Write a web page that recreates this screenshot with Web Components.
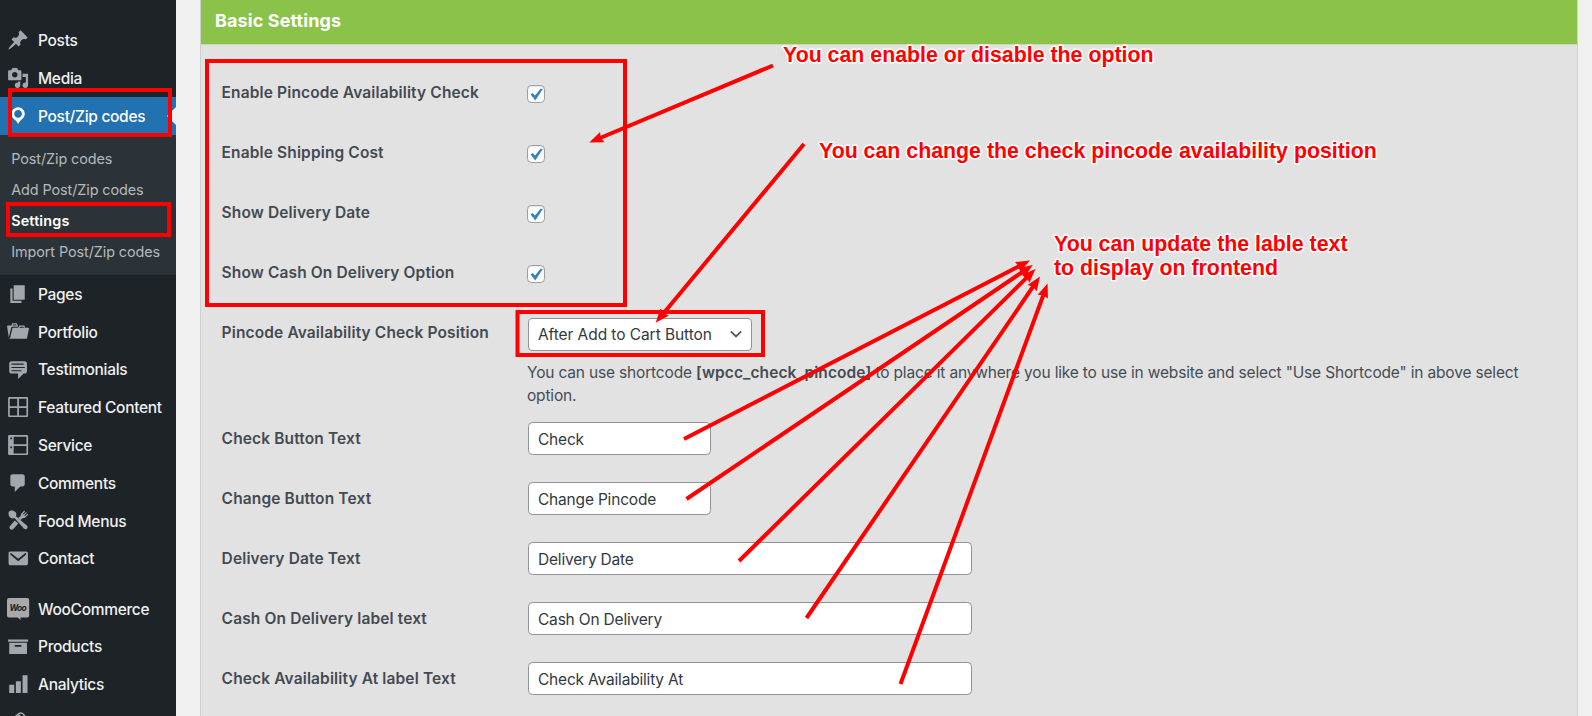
<!DOCTYPE html>
<html lang="en">
<head>
<meta charset="utf-8">
<title>Basic Settings</title>
<style>
html,body{margin:0;height:716px;overflow:hidden}
body{background:#f0f0f0;font-family:Inter,"Liberation Sans",sans-serif;font-size:15.5px;color:#3c434a}
</style>
</head>
<body>
<admin-page></admin-page>
<script>
const ICONS = {
  post:'<path d="M10.44 3.02l1.82-1.82 6.36 6.35-1.83 1.82c-1.05-.68-2.48-.57-3.41.36l-.75.75c-.92.93-1.04 2.35-.35 3.41l-1.83 1.82-2.41-2.41-2.8 2.79c-.42.42-3.38 2.71-3.8 2.29s1.86-3.39 2.28-3.81l2.79-2.79L4.1 9.36l1.83-1.82c1.05.69 2.48.57 3.4-.36l.75-.75c.93-.92 1.05-2.35.36-3.41z"/>',
  media:'<path fill-rule="evenodd" d="M13 11V4c0-.55-.45-1-1-1h-1.67L9 1H5L3.67 3H2c-.55 0-1 .45-1 1v7c0 .55.45 1 1 1h10c.55 0 1-.45 1-1zM7 4.5c1.38 0 2.5 1.12 2.5 2.5S8.38 9.5 7 9.5 4.5 8.38 4.5 7 5.62 4.5 7 4.5zM14 6h5v10.5c0 1.38-1.12 2.5-2.5 2.5S14 17.88 14 16.5s1.12-2.5 2.5-2.5c.17 0 .34.02.5.05V9h-3V6zm-4 8.05V13h2v3.5c0 1.38-1.12 2.5-2.5 2.5S7 17.88 7 16.5 8.12 14 9.5 14c.17 0 .34.02.5.05z"/>',
  location:'<path fill-rule="evenodd" d="M10 2C6.69 2 4 4.69 4 8c0 2.02 1.17 3.71 2.53 4.89.43.37 1.18.96 1.85 1.83.74.97 1.41 2.01 1.62 2.71.21-.7.88-1.74 1.62-2.71.67-.87 1.42-1.46 1.85-1.83C14.83 11.71 16 10.02 16 8c0-3.31-2.69-6-6-6zm0 2.56c1.9 0 3.44 1.54 3.44 3.44S11.9 11.44 10 11.44 6.56 9.9 6.56 8 8.1 4.56 10 4.56z"/>',
  page:'<path d="M6 15V2h10v13H6zm-1 1h8v2H3V5h2v11z"/>',
  portfolio:'<path fill-rule="evenodd" d="M4 5H.78c-.37 0-.74.32-.69.84l1.56 9.99S3.5 8.47 3.86 6.7c.11-.53.61-.7.98-.7H10s-.7-2.08-.77-2.31C9.11 3.25 8.89 3 8.45 3H5.14c-.36 0-.7.23-.8.64C4.25 4.04 4 5 4 5zm4.88 0h-4s.42-1 .87-1h2.13c.48 0 1 1 1 1zM2.67 16.25c-.31.47-.76.75-1.26.75h15.73c.54 0 .92-.31 1.03-.83.44-2.19 1.68-8.44 1.68-8.44.07-.5-.3-.73-.62-.73H16V5.53c0-.16-.26-.53-.66-.53h-3.76c-.52 0-.87.58-.87.58L10 7H5.59c-.32 0-.63.19-.69.5 0 0-1.59 6.7-1.72 7.33-.07.37-.22.99-.51 1.42zM15.38 7H11s.58-1 1.13-1h2.29c.71 0 .96 1 .96 1z"/>',
  testimonial:'<path fill-rule="evenodd" d="M4 3h12c.55 0 1.02.2 1.41.59S18 4.45 18 5v7c0 .55-.2 1.02-.59 1.41S16.55 14 16 14h-1l-5 5v-5H4c-.55 0-1.02-.2-1.41-.59S2 12.55 2 12V5c0-.55.2-1.02.59-1.41S3.45 3 4 3zm11 2H4v1h11V5zm1 3H4v1h12V8zm-3 3H4v1h9v-1z"/>',
  grid:'<path fill-rule="evenodd" d="M2 1h16a1 1 0 0 1 1 1v16a1 1 0 0 1-1 1H2a1 1 0 0 1-1-1V2a1 1 0 0 1 1-1zM2.5 2.5v6.7h6.7V2.5zM10.8 2.5v6.7h6.7V2.5zM2.5 10.8v6.7h6.7v-6.7zM10.8 10.8v6.7h6.7v-6.7z"/>',
  service:'<path fill-rule="evenodd" d="M2 1h16a1 1 0 0 1 1 1v16a1 1 0 0 1-1 1H2a1 1 0 0 1-1-1V2a1 1 0 0 1 1-1zM6 2.5v6.7h11.5V2.5zM6 10.8v6.7h11.5v-6.7zM3 3.2v1.6h1.6V3.2zM3 11.2v1.6h1.6v-1.6z"/>',
  comments:'<path d="M5 2h9c1.1 0 2 .9 2 2v7c0 1.1-.9 2-2 2h-2l-5 5v-5H5c-1.1 0-2-.9-2-2V4c0-1.1.9-2 2-2z"/>',
  food:'<path d="M2 2C3.600.800 6.400 1.300 7.600 2.800c1 1.200 1.100 2.600.5 3.700l9.800 8.400c.9.900.9 2 .1 2.800s-1.900.800-2.800-.1L6.700 8.100c-1.200.6-2.700.5-3.800-.4C1.300 6.400.800 3.500 2 2z"/><path d="M12.400 6.400c-.2-1 .1-1.700.8-2.500l2.400-2.500.7.600-2 2.500.6.500 2.300-2.300.7.700-2.300 2.300.5.600 2.500-2 .6.700-2.500 2.400c-.7.700-1.500 1-2.500.8L12.200 10 10 8zM7 10.300l3.200 2.700-4.500 5c-.9.900-2 .9-2.900.1s-.8-2 .1-2.900z"/>',
  email:'<path fill-rule="evenodd" d="M3 4h14.300c.9 0 1.600.700 1.600 1.600v9.200c0 .9-.7 1.600-1.600 1.600H3c-.9 0-1.600-.700-1.600-1.600V5.600C1.400 4.700 2.100 4 3 4zM3.600 5.500c-.7.200-.9.900-.4 1.400l6.900 5.900 6.900-5.900c.5-.5.300-1.200-.4-1.400l-6.500 5z"/>',
  woo:'<path d="M1.800 0h16.400A1.800 1.800 0 0 1 20 1.800v13.900a1.800 1.800 0 0 1-1.800 1.800H12l.300 2.400-2.800-2.400H1.800A1.800 1.800 0 0 1 0 15.700V1.800A1.800 1.800 0 0 1 1.800 0z" fill="#a9a9a9"/><text x="9.700" y="11.700" text-anchor="middle" font-family="Inter,sans-serif" font-style="italic" font-weight="700" font-size="7.600" letter-spacing="-.6" fill="#1d2327">Woo</text>',
  products:'<path fill-rule="evenodd" d="M1 4h18v2H1zM2 7h16v10.200H2zM7 9v1.500h6V9z"/>',
  analytics:'<path d="M2 10.500h4.500V18H2zM8 7.500h4.500V18H8zM14 2h4.500v16H14z"/>',
  marketing:'<path fill="none" stroke="#a2a7ad" stroke-width="1.400" d="M4 8l6.500-5.500c2-1.600 4.600-.2 5.500 2.500l2 7"/><path d="M7 6.500l4-3.500 3 3-2 5H5z"/>'
};

class AdminPage extends HTMLElement{
  constructor(){
    super();
    this.attachShadow({mode:'open'}).innerHTML=`
    <style>
      :host{display:flex;position:relative;width:1592px;height:716px;overflow:hidden}
      side-menu{flex:none}
      settings-panel{flex:1;margin:0 14.200px 0 24.500px}
    </style>
    <side-menu>
      <menu-item icon="post">Posts</menu-item>
      <menu-item icon="media">Media</menu-item>
      <menu-item icon="location" current>Post/Zip codes</menu-item>
      <sub-menu>
        <sub-item>Post/Zip codes</sub-item>
        <sub-item>Add Post/Zip codes</sub-item>
        <sub-item current>Settings</sub-item>
        <sub-item>Import Post/Zip codes</sub-item>
      </sub-menu>
      <menu-item icon="page">Pages</menu-item>
      <menu-item icon="portfolio">Portfolio</menu-item>
      <menu-item icon="testimonial">Testimonials</menu-item>
      <menu-item icon="grid">Featured Content</menu-item>
      <menu-item icon="service">Service</menu-item>
      <menu-item icon="comments">Comments</menu-item>
      <menu-item icon="food">Food Menus</menu-item>
      <menu-item icon="email">Contact</menu-item>
      <menu-item icon="woo" spaced>WooCommerce</menu-item>
      <menu-item icon="products">Products</menu-item>
      <menu-item icon="analytics">Analytics</menu-item>
      <menu-item icon="marketing">Marketing</menu-item>
    </side-menu>
    <settings-panel heading="Basic Settings">
      <setting-row label="Enable Pincode Availability Check"><check-box></check-box></setting-row>
      <setting-row label="Enable Shipping Cost"><check-box></check-box></setting-row>
      <setting-row label="Show Delivery Date"><check-box></check-box></setting-row>
      <setting-row label="Show Cash On Delivery Option"><check-box></check-box></setting-row>
      <setting-row label="Pincode Availability Check Position" tall>
        <select-box>After Add to Cart Button</select-box>
        <help-text>You can use shortcode <b>[wpcc_check_pincode]</b> to place it anywhere you like to use in website and select "Use Shortcode" in above select<br>option.</help-text>
      </setting-row>
      <setting-row field label="Check Button Text"><text-box>Check</text-box></setting-row>
      <setting-row field label="Change Button Text"><text-box>Change Pincode</text-box></setting-row>
      <setting-row field label="Delivery Date Text"><text-box wide>Delivery Date</text-box></setting-row>
      <setting-row field label="Cash On Delivery label text"><text-box wide>Cash On Delivery</text-box></setting-row>
      <setting-row field label="Check Availability At label Text"><text-box wide>Check Availability At</text-box></setting-row>
    </settings-panel>
    <note-layer></note-layer>`;
  }
}

class SideMenu extends HTMLElement{
  constructor(){
    super();
    this.attachShadow({mode:'open'}).innerHTML=`
    <style>:host{display:flex;flex-direction:column;box-sizing:border-box;width:175.500px;height:716px;overflow:hidden;padding-top:21.500px;background:#1d2327}</style><slot></slot>`;
  }
}

class MenuItem extends HTMLElement{
  constructor(){
    super();
    this.attachShadow({mode:'open'}).innerHTML=`
    <style>
      :host{display:flex;position:relative;flex:none;align-items:center;height:37.800px;color:#f0f0f1;font-weight:500;letter-spacing:-.3px;white-space:nowrap}
      :host([spaced]){margin-top:12.500px}
      :host([current]){background:#2271b1;color:#fff}
      :host([current])::after{content:"";position:absolute;right:0;top:50%;margin-top:-9px;border:solid transparent;border-width:9px 9px 9px 0;border-right-color:#f0f0f0}
      svg{flex:none;width:22.200px;height:22.200px;margin:0 9px 0 6.800px;fill:#a2a7ad;overflow:visible}
      span{padding-top:1px}
      :host([current]) svg{fill:#fff}
    </style>
    <svg viewBox="0 0 20 20">${ICONS[this.getAttribute('icon')]||''}</svg><span><slot></slot></span>`;
  }
}

class SubMenu extends HTMLElement{
  constructor(){
    super();
    this.attachShadow({mode:'open'}).innerHTML=`
    <style>:host{display:flex;flex:none;flex-direction:column;padding:7.800px 0;background:#2c3338}</style><slot></slot>`;
  }
}

class SubItem extends HTMLElement{
  constructor(){
    super();
    this.attachShadow({mode:'open'}).innerHTML=`
    <style>
      :host{display:flex;align-items:center;height:31.100px;padding-left:11.200px;font-size:14.400px;letter-spacing:-.08px;color:#b4b9be;white-space:nowrap}
      :host([current]){color:#fff;font-weight:600;letter-spacing:.15px}
    </style><slot></slot>`;
  }
}

class SettingsPanel extends HTMLElement{
  constructor(){
    super();
    this.attachShadow({mode:'open'}).innerHTML=`
    <style>
      :host{display:block;box-sizing:border-box;height:730px;background:#e2e2e2;border:solid #cfd0d2;border-width:0 1px}
      header{display:flex;align-items:center;box-sizing:border-box;height:44px;padding:0 0 3px 14px;background:#8bc34a;color:#fff;font-size:18px;font-weight:650;letter-spacing:.1px}
      section{border-top:1px solid #c9d8b5;padding:16px 0 0 20.600px}
    </style>
    <header>${this.getAttribute('heading')||''}</header>
    <section><slot></slot></section>`;
  }
}

class SettingRow extends HTMLElement{
  constructor(){
    super();
    this.attachShadow({mode:'open'}).innerHTML=`
    <style>
      :host{display:grid;grid-template-columns:306.400px 1fr;box-sizing:border-box;height:60px;align-items:start}
      :host([tall]){height:104.400px}
      label{padding-top:22px;line-height:20px;font-weight:600;letter-spacing:.13px;color:#434a52}
      :host([field]) label{padding-top:24px}
      div{padding-top:16.600px}
    </style>
    <label>${this.getAttribute('label')||''}</label>
    <div><slot></slot></div>`;
  }
}

class CheckBox extends HTMLElement{
  constructor(){
    super();
    this.attachShadow({mode:'open'}).innerHTML=`
    <style>
      :host{display:flex;box-sizing:border-box;width:18px;height:18px;margin:7.700px 0 0 -1px;background:#fff;border:1px solid #9a9da2;border-radius:4.400px;box-shadow:inset 0 1px 2px rgba(0,0,0,.1)}
      svg{width:16px;height:16px}
    </style>
    <svg viewBox="0 0 16 16"><path d="M2.600 8.400l2.100-1.300 2.300 2.500 5.500-6.900 2.300.2-7.500 11.600z" fill="#3582c4"/></svg>`;
  }
}

class TextBox extends HTMLElement{
  constructor(){
    super();
    this.attachShadow({mode:'open'}).innerHTML=`
    <style>
      :host{display:flex;align-items:center;box-sizing:border-box;width:182.700px;height:33.200px;padding:1px 0 0 9px;background:#fff;border:1px solid #8f9297;border-radius:4.400px;color:#32393f;letter-spacing:-.19px}
      :host([wide]){width:444.200px}
    </style><slot></slot>`;
  }
}

class SelectBox extends HTMLElement{
  constructor(){
    super();
    this.attachShadow({mode:'open'}).innerHTML=`
    <style>
      :host{display:flex;align-items:center;justify-content:space-between;box-sizing:border-box;width:224.200px;height:33.200px;padding:0 8px 0 9px;background:#fff;border:1px solid #8f9297;border-radius:4px;color:#32393f;letter-spacing:-.07px}
      svg{width:14px;height:14px}
    </style><slot></slot>
    <svg viewBox="0 0 14 14"><path d="M1.800 4.300L7 9.500l5.200-5.200" fill="none" stroke="#555a60" stroke-width="1.900"/></svg>`;
  }
}

class HelpText extends HTMLElement{
  constructor(){
    super();
    this.attachShadow({mode:'open'}).innerHTML=`
    <style>
      :host{display:block;margin:10.200px 0 0 -1px;line-height:23.300px;letter-spacing:-.17px;color:#454c54;white-space:nowrap}
      ::slotted(b){font-weight:600;letter-spacing:.1px}
    </style><slot></slot>`;
  }
}

class NoteLayer extends HTMLElement{
  constructor(){
    super();
    const arrows=[[773,65.500,589.300,142.500],[804,144,655.700,322.700],[684,439,1030,260.500],[686.500,499,1032.800,265],[739,561,1035.500,269],[806.500,618,1040,276.500],[900.500,684,1047.600,283.500]];
    const draw=([x1,y1,x2,y2])=>{
      const l=Math.hypot(x2-x1,y2-y1),a=Math.atan2(y2-y1,x2-x1)*180/Math.PI;
      return `<path transform="translate(${x1} ${y1}) rotate(${a})" d="M0-2H${l-13}L${l-14}-5.500 ${l} 0 ${l-14} 5.500 ${l-13} 2H0z"/>`;
    };
    const boxes=[[205,59,422,248],[515.500,310,249.500,47],[8,88,164,49],[6,202,165,35]];
    this.attachShadow({mode:'open'}).innerHTML=`
    <style>
      :host{position:absolute;inset:0;pointer-events:none}
      svg{display:block}
      text{font:700 21.330px "Liberation Sans",Arial,sans-serif;fill:red;stroke:#fff;stroke-width:3px;stroke-linejoin:round;paint-order:stroke}
    </style>
    <svg width="1592" height="716">
      <g fill="none" stroke="red" stroke-width="4">${boxes.map(([x,y,w,h])=>`<rect x="${x+2}" y="${y+2}" width="${w-4}" height="${h-4}"/>`).join('')}</g>
      <g fill="red">${arrows.map(draw).join('')}</g>
      <text x="783" y="62">You can enable or disable the option</text>
      <text x="819" y="158">You can change the check pincode availability position</text>
      <text x="1054" y="251">You can update the lable text</text>
      <text x="1054" y="275">to display on frontend</text>
    </svg>`;
  }
}

const parts={'menu-item':MenuItem,'sub-item':SubItem,'sub-menu':SubMenu,'side-menu':SideMenu,'check-box':CheckBox,'text-box':TextBox,'select-box':SelectBox,'help-text':HelpText,'setting-row':SettingRow,'settings-panel':SettingsPanel,'note-layer':NoteLayer,'admin-page':AdminPage};
for(const [name,cls] of Object.entries(parts)) customElements.define(name,cls);
</script>
</body>
</html>
